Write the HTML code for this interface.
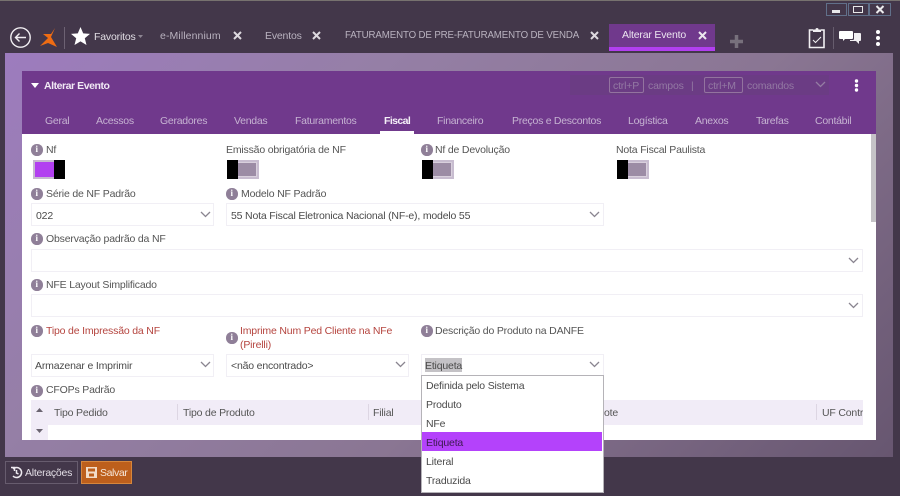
<!DOCTYPE html>
<html lang="pt">
<head>
<meta charset="utf-8">
<title>Alterar Evento</title>
<style>
html,body{margin:0;padding:0;width:900px;height:496px;overflow:hidden;background:#43374a;}
body{font-family:"Liberation Sans",sans-serif;font-size:10.5px;color:#4a4a4a;position:relative;}
#w{position:absolute;left:0;top:0;width:900px;height:496px;overflow:hidden;filter:blur(.35px);}
#w div,#w span,#w svg{position:absolute;}
.t{white-space:nowrap;line-height:14px;letter-spacing:-.18px;}
.tab{color:#b9b2bf;font-size:10.5px;top:28px;}
.x{top:30px;width:11px;height:11px;}
.nav{color:#c6b3d2;font-size:10.5px;top:114px;letter-spacing:-.27px;}
.lb{color:#555;font-size:10.5px;}
.red{color:#b5453f;}
.sel{background:#fff;border:1px solid #f1eff5;box-sizing:border-box;height:23px;}
.val{font-size:10.5px;color:#4a4a4a;}
.i{width:11.500px;height:11.500px;border-radius:50%;background:#8f7f98;color:#fff;font:bold 9px/11.500px "Liberation Serif",serif;text-align:center;}
.tg{width:32px;height:19px;background:#c8bdd0;}
.tg i{position:absolute;left:10px;top:2px;width:20px;height:15px;background:#9c8ca5;border:1px solid #d9d0dd;box-sizing:border-box;}
.tg b{position:absolute;left:0;top:0;width:11px;height:19px;background:#000;}
.opt{left:426px;font-size:10.5px;color:#4a4a4a;}
.th{font-size:10.5px;color:#555;top:406px;}
.sep{top:404px;width:1px;height:16px;background:#ddd6e3;}
.hd{color:#9379a3;font-size:10.5px;top:79px;}
</style>
</head>
<body>
<div id="w">
<div style="left:0;top:0;width:900px;height:1px;background:#77726f"></div>

<svg style="left:9px;top:26px" width="23" height="23" viewBox="0 0 23 23" fill="none" stroke="#f1eef2"><circle cx="11.5" cy="11.5" r="9.7" stroke-width="1.4"/><path d="M17 11.5H6.5M10.5 7.5l-4 4 4 4" stroke-width="1.4"/></svg>
<svg style="left:39px;top:27px" width="19" height="21" viewBox="0 0 19 21"><path d="M16 1 12 7H4l5 4-8 8 8-3 9 4-6-10z" fill="#ef6c13"/></svg>
<div style="left:64px;top:27px;width:1px;height:22px;background:#6d6273"></div>
<svg style="left:70px;top:26px" width="21" height="21" viewBox="0 0 21 21"><path d="M10.5 1l2.7 6.4 6.8.5-5.2 4.4 1.7 6.7-6-3.6-6 3.6 1.7-6.7L1 7.9l6.800-.5z" fill="#fff"/></svg>
<div class="t" style="left:94px;top:30px;color:#e0dce3;font-size:10.5px">Favoritos</div>
<svg style="left:138px;top:35px" width="5" height="3" viewBox="0 0 5 3"><path d="M0 0h5L2.500 3z" fill="#8d8592"/></svg>

<div class="t tab" style="left:160px;letter-spacing:.1px;top:29px">e-Millennium</div>
<svg class="x" style="left:232px" viewBox="0 0 11 11"><path d="M2 2l7 7M9 2l-7 7" stroke="#ddd9df" stroke-width="2"/></svg>
<div class="t tab" style="left:265px;top:29px">Eventos</div>
<svg class="x" style="left:311px" viewBox="0 0 11 11"><path d="M2 2l7 7M9 2l-7 7" stroke="#ddd9df" stroke-width="2"/></svg>
<div class="t tab" style="left:345px;font-size:9.700px;letter-spacing:-.12px;top:29px">FATURAMENTO DE PRE-FATURAMENTO DE VENDA</div>
<svg class="x" style="left:589px" viewBox="0 0 11 11"><path d="M2 2l7 7M9 2l-7 7" stroke="#ddd9df" stroke-width="2"/></svg>

<div style="left:609px;top:24px;width:106px;height:27px;background:#70398c"></div>
<div style="left:609px;top:47px;width:106px;height:4px;background:#b23ff0"></div>
<div class="t tab" style="left:622px;color:#ece6f0;top:28px">Alterar Evento</div>
<svg class="x" style="left:697px" viewBox="0 0 11 11"><path d="M2 2l7 7M9 2l-7 7" stroke="#ebe6ee" stroke-width="2"/></svg>
<svg style="left:730px;top:35px" width="13" height="13" viewBox="0 0 13 13"><path d="M6.500 0v13M0 6.500h13" stroke="#77707c" stroke-width="3.500"/></svg>

<div style="left:826px;top:3px;width:21px;height:13px;border:1px solid #61708a;box-sizing:border-box"></div>
<div style="left:848px;top:3px;width:21px;height:13px;border:1px solid #61708a;box-sizing:border-box"></div>
<div style="left:869px;top:3px;width:22px;height:13px;border:1px solid #61708a;box-sizing:border-box"></div>
<div style="left:832px;top:10px;width:8px;height:3px;background:#e8e8ea"></div>
<div style="left:853px;top:6px;width:10px;height:7px;border:1.500px solid #e8e8ea;box-sizing:border-box"></div>
<svg style="left:875px;top:5px" width="10" height="9" viewBox="0 0 10 9"><path d="M1.500 1l7 7M8.500 1l-7 7" stroke="#ececee" stroke-width="2"/></svg>

<svg style="left:808px;top:26px" width="18" height="23" viewBox="0 0 18 23" fill="none"><path d="M5 4H1.500v17.500h14.500V4H13" stroke="#f2f0f3" stroke-width="1.600"/><path d="M5 6V3.500h2.500a1.500 1.500 0 0 1 3 0H13V6z" fill="#f2f0f3"/><path d="M5 14l2.500 2.500L13 11" stroke="#f2f0f3"/></svg>
<div style="left:833px;top:27px;width:1px;height:22px;background:#665c6d"></div>
<svg style="left:839px;top:29px" width="22" height="17" viewBox="0 0 22 17"><path d="M1 2h12a1 1 0 0 1 1 1v6a1 1 0 0 1-1 1H6l-2 2v-2H1a1 1 0 0 1-1-1V3a1 1 0 0 1 1-1z" fill="#fff"/><path d="M15 4h6a1 1 0 0 1 1 1v6a1 1 0 0 1-1 1h-1v3l-3-3h-6v-1h3a1 1 0 0 0 1-1z" fill="#f1eff2"/></svg>
<svg style="left:875px;top:29px" width="6" height="18" viewBox="0 0 6 18"><circle cx="3" cy="3" r="2" fill="#fff"/><circle cx="3" cy="9" r="2" fill="#fff"/><circle cx="3" cy="15" r="2" fill="#fff"/></svg>

<div style="left:5px;top:53px;width:888px;height:404px;background:linear-gradient(135deg,#9d7cbe 0%,#957fa6 30%,#8a7693 60%,#675670 100%)"></div>

<div style="left:22px;top:71px;width:854px;height:63px;background:#70398c"></div>
<svg style="left:31px;top:83px" width="8" height="5" viewBox="0 0 8 5"><path d="M0 0h8L4 5z" fill="#fff"/></svg>
<div class="t" style="left:44px;top:79px;color:#f1e9f5;font-size:10.5px;font-weight:bold;letter-spacing:-.45px">Alterar Evento</div>
<div style="left:570px;top:75px;width:259px;height:20px;background:#6b3c84"></div>
<div style="left:609px;top:77px;width:35px;height:16px;border:1px solid #93739f;box-sizing:border-box;border-radius:2px"></div>
<div class="t hd" style="left:613px">ctrl+P</div>
<div class="t hd" style="left:648px">campos</div>
<div class="t hd" style="left:691px">|</div>
<div style="left:704px;top:77px;width:39px;height:16px;border:1px solid #93739f;box-sizing:border-box;border-radius:2px"></div>
<div class="t hd" style="left:708px">ctrl+M</div>
<div class="t hd" style="left:747px">comandos</div>
<svg style="left:815px;top:81px" width="11" height="7" viewBox="0 0 11 7"><path d="M1 1l4.500 4.500L10 1" stroke="#947ca3" stroke-width="1.300" fill="none"/></svg>
<svg style="left:854px;top:79px" width="5" height="13" viewBox="0 0 5 13"><circle cx="2.500" cy="2" r="1.700" fill="#fff"/><circle cx="2.500" cy="6.500" r="1.700" fill="#fff"/><circle cx="2.500" cy="11" r="1.700" fill="#fff"/></svg>

<div class="t nav" style="left:45px">Geral</div>
<div class="t nav" style="left:96px">Acessos</div>
<div class="t nav" style="left:160px">Geradores</div>
<div class="t nav" style="left:234px">Vendas</div>
<div class="t nav" style="left:295px">Faturamentos</div>
<div class="t nav" style="left:384px;color:#f4eff7;font-weight:bold;letter-spacing:-.6px">Fiscal</div>
<div style="left:380px;top:131px;width:34px;height:3px;background:#fff"></div>
<div class="t nav" style="left:437px">Financeiro</div>
<div class="t nav" style="left:512px">Preços e Descontos</div>
<div class="t nav" style="left:628px">Logística</div>
<div class="t nav" style="left:695px">Anexos</div>
<div class="t nav" style="left:756px">Tarefas</div>
<div class="t nav" style="left:815px">Contábil</div>

<div style="left:22px;top:134px;width:854px;height:306px;background:#fff;overflow:hidden"></div>
<div style="left:871px;top:134px;width:5px;height:88px;background:#c5c3c7"></div>

<div class="i" style="left:31px;top:144px">i</div>
<div class="t lb" style="left:46px;top:143px">Nf</div>
<div class="tg" style="left:33px;top:160px;background:#c6b8cf"><i style="left:2px;top:2px;width:20px;background:#b23ff0;border:0"></i><b style="left:21px"></b></div>

<div class="t lb" style="left:226px;top:143px">Emissão obrigatória de NF</div>
<div class="tg" style="left:227px;top:160px"><i></i><b></b></div>

<div class="i" style="left:421px;top:144px">i</div>
<div class="t lb" style="left:435px;top:143px">Nf de Devolução</div>
<div class="tg" style="left:422px;top:160px"><i></i><b></b></div>

<div class="t lb" style="left:616px;top:143px">Nota Fiscal Paulista</div>
<div class="tg" style="left:617px;top:160px"><i></i><b></b></div>

<div class="i" style="left:31px;top:188px">i</div>
<div class="t lb" style="left:46px;top:187px">Série de NF Padrão</div>
<div class="sel" style="left:31px;top:203px;width:183px"></div>
<div class="t val" style="left:36px;top:209px">022</div>
<svg style="left:200px;top:211px" width="11" height="7" viewBox="0 0 11 7"><path d="M1 1l4.500 4.500L10 1" stroke="#8a8590" stroke-width="1.300" fill="none"/></svg>

<div class="i" style="left:226px;top:188px">i</div>
<div class="t lb" style="left:241px;top:187px">Modelo NF Padrão</div>
<div class="sel" style="left:226px;top:203px;width:378px"></div>
<div class="t val" style="left:231px;top:209px">55 Nota Fiscal Eletronica Nacional (NF-e), modelo 55</div>
<svg style="left:589px;top:211px" width="11" height="7" viewBox="0 0 11 7"><path d="M1 1l4.500 4.500L10 1" stroke="#8a8590" stroke-width="1.300" fill="none"/></svg>

<div class="i" style="left:31px;top:233px">i</div>
<div class="t lb" style="left:46px;top:232px">Observação padrão da NF</div>
<div class="sel" style="left:31px;top:249px;width:832px"></div>
<svg style="left:848px;top:257px" width="11" height="7" viewBox="0 0 11 7"><path d="M1 1l4.500 4.500L10 1" stroke="#8a8590" stroke-width="1.300" fill="none"/></svg>

<div class="i" style="left:31px;top:279px">i</div>
<div class="t lb" style="left:46px;top:278px">NFE Layout Simplificado</div>
<div class="sel" style="left:31px;top:294px;width:832px"></div>
<svg style="left:848px;top:302px" width="11" height="7" viewBox="0 0 11 7"><path d="M1 1l4.500 4.500L10 1" stroke="#8a8590" stroke-width="1.300" fill="none"/></svg>

<div class="i" style="left:31px;top:325px">i</div>
<div class="t lb red" style="left:46px;top:324px">Tipo de Impressão da NF</div>
<div class="i" style="left:226px;top:332px">i</div>
<div class="t lb red" style="left:240px;top:324px">Imprime Num Ped Cliente na NFe</div>
<div class="t lb red" style="left:240px;top:338px">(Pirelli)</div>
<div class="i" style="left:421px;top:325px">i</div>
<div class="t lb" style="left:435px;top:324px">Descrição do Produto na DANFE</div>

<div class="sel" style="left:31px;top:354px;width:183px"></div>
<div class="t val" style="left:35px;top:359px">Armazenar e Imprimir</div>
<svg style="left:200px;top:361px" width="11" height="7" viewBox="0 0 11 7"><path d="M1 1l4.500 4.500L10 1" stroke="#8a8590" stroke-width="1.300" fill="none"/></svg>
<div class="sel" style="left:226px;top:354px;width:183px"></div>
<div class="t val" style="left:231px;top:359px">&lt;não encontrado&gt;</div>
<svg style="left:395px;top:361px" width="11" height="7" viewBox="0 0 11 7"><path d="M1 1l4.500 4.500L10 1" stroke="#8a8590" stroke-width="1.300" fill="none"/></svg>
<div class="sel" style="left:421px;top:354px;width:183px"></div>
<div style="left:425px;top:358px;width:37px;height:14px;background:#c4c2c6"></div>
<div class="t val" style="left:425px;top:359px">Etiqueta</div>
<svg style="left:589px;top:361px" width="11" height="7" viewBox="0 0 11 7"><path d="M1 1l4.500 4.500L10 1" stroke="#8a8590" stroke-width="1.300" fill="none"/></svg>

<div class="i" style="left:31px;top:385px">i</div>
<div class="t lb" style="left:46px;top:383px">CFOPs Padrão</div>

<div style="left:31px;top:400px;width:832px;height:25px;background:#f1ecf7"></div>
<div style="left:31px;top:425px;width:17px;height:15px;background:#f1ecf7"></div>
<svg style="left:36px;top:408px" width="7" height="4" viewBox="0 0 7 4"><path d="M0 4h7L3.500 0z" fill="#6a6470"/></svg>
<svg style="left:36px;top:429px" width="7" height="4" viewBox="0 0 7 4"><path d="M0 0h7L3.500 4z" fill="#6a6470"/></svg>
<div class="t th" style="left:54px">Tipo Pedido</div>
<div class="sep" style="left:177px"></div>
<div class="t th" style="left:183px">Tipo de Produto</div>
<div class="sep" style="left:368px"></div>
<div class="t th" style="left:373px">Filial</div>
<div class="t th" style="left:604px">ote</div>
<div class="sep" style="left:816px"></div>
<div style="left:822px;top:406px;width:41px;height:14px;overflow:hidden;white-space:nowrap;font-size:10.5px;line-height:14px;color:#555;letter-spacing:-.18px">UF Contr</div>

<div style="left:421px;top:375px;width:183px;height:118px;background:#fff;border:1px solid #b5b3b8;box-sizing:border-box"></div>
<div style="left:422px;top:432px;width:180px;height:19px;background:#b442fb"></div>
<div class="t opt" style="top:379px">Definida pelo Sistema</div>
<div class="t opt" style="top:398px">Produto</div>
<div class="t opt" style="top:417px">NFe</div>
<div class="t opt" style="top:436px;color:#3d1a52">Etiqueta</div>
<div class="t opt" style="top:455px">Literal</div>
<div class="t opt" style="top:474px">Traduzida</div>

<div style="left:5px;top:461px;width:73px;height:23px;border:1px solid #675c6e;box-sizing:border-box"></div>
<svg style="left:10px;top:466px" width="13" height="13" viewBox="0 0 13 13" fill="none" stroke="#eeeaf0" stroke-width="1.500"><path d="M3 3a5 5 0 1 1 0 7"/><path d="M1 1.500h3.500V5"/><path d="M6.500 4v3l2 1"/></svg>
<div class="t" style="left:25px;top:466px;color:#e3dee6;font-size:10.5px;letter-spacing:-.25px">Alterações</div>
<div style="left:81px;top:461px;width:51px;height:23px;background:#bd5f1c;border:1px solid #d6863c;box-sizing:border-box"></div>
<svg style="left:86px;top:467px" width="11" height="11" viewBox="0 0 11 11"><path d="M0 0h11v11H0z" fill="#f2dcc8"/><path d="M2 1.500h7v3H2zM3 6.500h5v3H3z" fill="#bd5f1c"/></svg>
<div class="t" style="left:100px;top:466px;color:#f6e6d8;font-size:10.5px;letter-spacing:-.4px">Salvar</div>
</div>
</body>
</html>
